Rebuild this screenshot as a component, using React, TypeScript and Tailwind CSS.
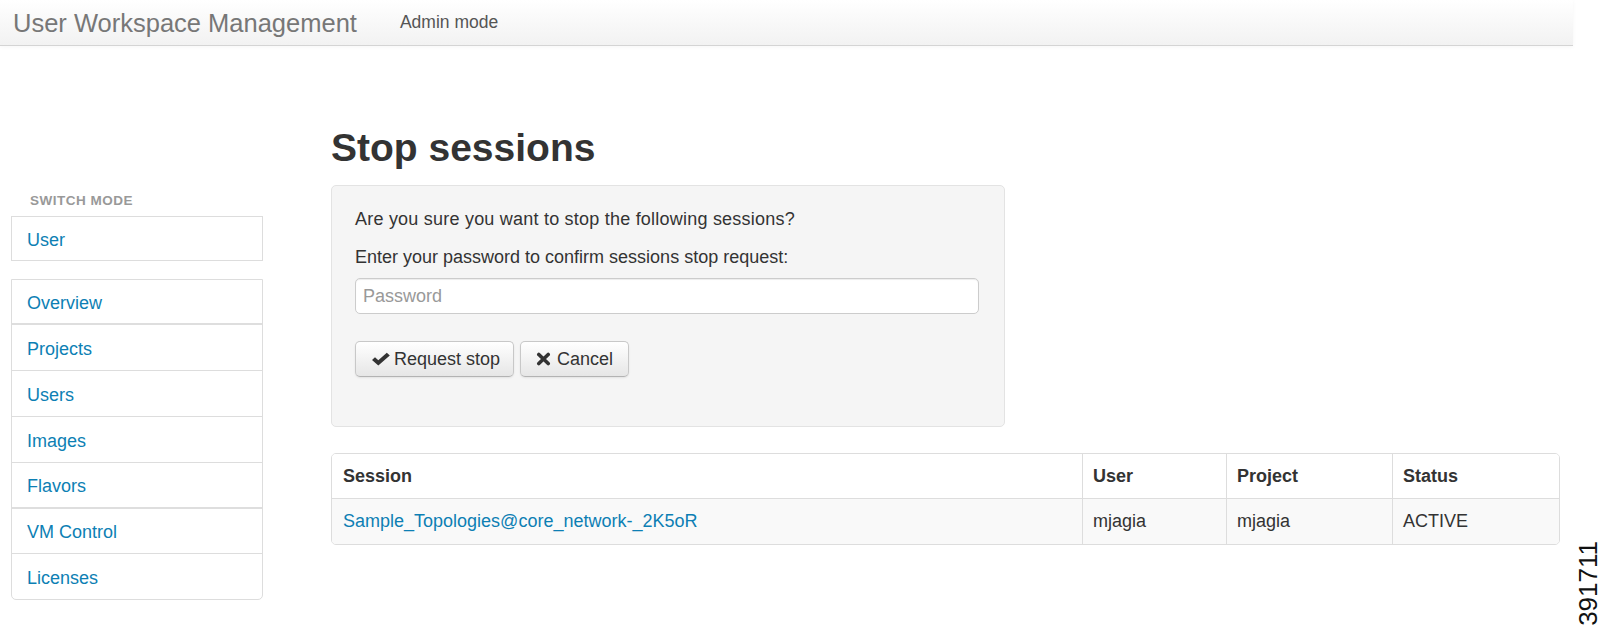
import React from 'react'

const LINK = 'text-[#0d7fb4]'

const navItems = [
  { label: 'Overview', cls: 'h-[45px] border-b-2 border-[#dedede]' },
  { label: 'Projects', cls: 'h-[46px] border-b border-[#ddd]' },
  { label: 'Users', cls: 'h-[46px] border-b border-[#ddd]' },
  { label: 'Images', cls: 'h-[46px] border-b border-[#ddd]' },
  { label: 'Flavors', cls: 'h-[46px] border-b-2 border-[#dedede]' },
  { label: 'VM Control', cls: 'h-[45px] border-b border-[#ddd]' },
  { label: 'Licenses', cls: 'h-[45px]' },
]

const sessions = [
  { session: 'Sample_Topologies@core_network-_2K5oR', user: 'mjagia', project: 'mjagia', status: 'ACTIVE' },
]

function CheckIcon() {
  return (
    <svg width="20" height="14" viewBox="0 0 20 14" className="shrink-0">
      <path d="M1 8 L4 5.3 L7.3 8.3 L15.8 0.8 L18.8 3.6 L7.3 13.4 Z" fill="#333" />
    </svg>
  )
}

function RemoveIcon() {
  return (
    <svg width="15" height="14" viewBox="0 0 15 14" className="shrink-0">
      <path d="M2.8 2.5 L12.2 11.5 M12.2 2.5 L2.8 11.5" stroke="#333" strokeWidth="3.6" strokeLinecap="round" />
    </svg>
  )
}

function Button({ icon, label, width, gap }: { icon: React.ReactNode; label: string; width: string; gap: string }) {
  return (
    <button
      type="button"
      className={`${width} h-[36px] flex items-center pl-[15px] rounded-[5px] border border-[#c8c8c8] border-b-[#b3b3b3] bg-linear-to-b from-white to-[#e6e6e6] shadow-[inset_0_1px_0_rgba(255,255,255,0.2),0_1px_2px_rgba(0,0,0,0.08)] text-[18px] text-[#333] leading-[25px]`}
    >
      {icon}
      <span className={gap}>{label}</span>
    </button>
  )
}

export default function App() {
  return (
    <div className="relative w-[1604px] h-[632px] overflow-hidden bg-white font-['Liberation_Sans',Arial,sans-serif] text-[#333]">
      <header className="w-[1573px] h-[46px] flex items-center border-b border-[#d4d4d4] bg-linear-to-b from-white to-[#f2f2f2] shadow-[0_1px_4px_rgba(0,0,0,0.04)]">
        <span className="pl-[13px] text-[25.5px] leading-[30px] text-[#777]">User Workspace Management</span>
        <span className="ml-[43px] text-[17.5px] leading-[25px] text-[#555]">Admin mode</span>
      </header>

      <div className="flex">
        <aside className="ml-[11px] w-[252px] pt-[145px]">
          <div className="pl-[19px] text-[13.5px] leading-[20px] font-bold uppercase tracking-[0.5px] text-[#999]">
            Switch mode
          </div>
          <div className={`mt-[5px] h-[45px] flex items-center pl-[15px] pt-[3px] border border-[#ddd] bg-white text-[18px] ${LINK}`}>
            User
          </div>
          <ul className="mt-[18px] border border-[#ddd] rounded-b-[5px] bg-white">
            {navItems.map((item) => (
              <li key={item.label} className={`${item.cls} flex items-center pl-[15px] pt-[3px] text-[18px] ${LINK}`}>
                {item.label}
              </li>
            ))}
          </ul>
        </aside>

        <main className="ml-[68px] w-[1229px] pt-[80px]">
          <h1 className="text-[39px] leading-[44px] font-bold text-[#333]">Stop sessions</h1>

          <div className="mt-[15px] w-[674px] border border-[#e3e3e3] rounded-[5px] bg-[#f5f5f5] pt-[21px] pl-[23px] pr-[25px] pb-[49px] text-[18px] leading-[25px]">
            <p className="mb-[13px] tracking-[0.22px]">Are you sure you want to stop the following sessions?</p>
            <p>Enter your password to confirm sessions stop request:</p>
            <input
              type="password"
              placeholder="Password"
              className="mt-[8px] block w-[624px] h-[36px] px-[7px] border border-[#ccc] rounded-[5px] bg-white shadow-[inset_0_1px_1px_rgba(0,0,0,0.075)] text-[18px] placeholder:text-[#999] outline-none"
            />
            <div className="mt-[27px] flex gap-[6px]">
              <Button icon={<CheckIcon />} label="Request stop" width="w-[159px]" gap="ml-[3px]" />
              <Button icon={<RemoveIcon />} label="Cancel" width="w-[109px]" gap="ml-[6px]" />
            </div>
          </div>

          <div className="mt-[26px] border border-[#ddd] rounded-[5px] overflow-hidden text-[18px] leading-[25px]">
            <div className="grid grid-cols-[750px_144px_166px_1fr] h-[45px] border-b border-[#ddd] bg-white font-bold">
              <div className="flex items-center pl-[11px]">Session</div>
              <div className="flex items-center pl-[10px] border-l border-[#ddd]">User</div>
              <div className="flex items-center pl-[10px] border-l border-[#ddd]">Project</div>
              <div className="flex items-center pl-[10px] border-l border-[#ddd]">Status</div>
            </div>
            {sessions.map((s) => (
              <div key={s.session} className="grid grid-cols-[750px_144px_166px_1fr] h-[45px] bg-[#f9f9f9]">
                <div className={`flex items-center pl-[11px] ${LINK}`}>{s.session}</div>
                <div className="flex items-center pl-[10px] border-l border-[#ddd]">{s.user}</div>
                <div className="flex items-center pl-[10px] border-l border-[#ddd]">{s.project}</div>
                <div className="flex items-center pl-[10px] border-l border-[#ddd]">{s.status}</div>
              </div>
            ))}
          </div>
        </main>
      </div>

      <div className="absolute left-[1575px] top-[541px] [writing-mode:vertical-rl] rotate-180 text-[26px] leading-[26px] text-[#111]">
        391711
      </div>
    </div>
  )
}
